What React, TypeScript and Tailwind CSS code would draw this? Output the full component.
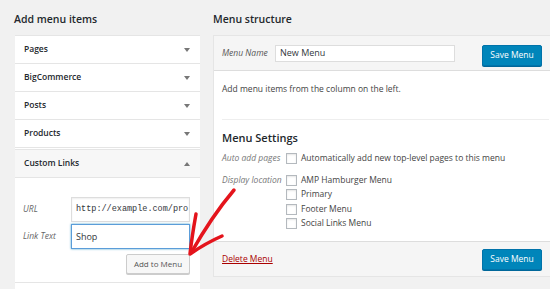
import React from 'react';

const font = { fontFamily: '"Open Sans", "Noto Sans", sans-serif' };

const sections = ['Pages', 'BigCommerce', 'Posts', 'Products'];
const locations = ['AMP Hamburger Menu', 'Primary', 'Footer Menu', 'Social Links Menu'];

const Caret = ({ up = false }: { up?: boolean }) => (
  <span
    className={
      up
        ? 'w-0 h-0 border-x-[3px] border-x-transparent border-b-[4px] border-b-[#777]'
        : 'w-0 h-0 border-x-[3px] border-x-transparent border-t-[4px] border-t-[#777]'
    }
  />
);

const Checkbox = () => (
  <span className="w-[11px] h-[11px] border border-[#b4b9be] bg-white shadow-[inset_0_1px_2px_rgba(0,0,0,0.1)] shrink-0" />
);

const BlueButton = () => (
  <button className="w-[60px] h-[21px] rounded-[2px] bg-[#0085ba] border border-[#0073aa] text-white text-[8.5px] shadow-[0_1px_0_#006799]">
    Save Menu
  </button>
);

export default function App() {
  return (
    <div className="relative w-[550px] h-[289px] overflow-hidden bg-[#f1f1f1] text-[#23282d]" style={font}>
      <div className="flex gap-[13px] pl-[15px]">
        {/* left column */}
        <div className="w-[185px] shrink-0">
          <h2 className="h-[35px] pt-[12px] -ml-[1px] text-[10.5px] font-semibold leading-[14px]">Add menu items</h2>
          <div className="bg-white border-t border-[#e5e5e5]">
            {sections.map((s) => (
              <div key={s} className="h-[28px] flex items-center justify-between pl-[9px] pr-[10px] border-b border-[#e5e5e5] text-[8.5px] font-semibold">
                <span>{s}</span>
                <Caret />
              </div>
            ))}
            <div className="h-[1px] bg-white" />
            <div className="h-[29px] flex items-center justify-between pl-[9px] pr-[10px] border-y border-[#e5e5e5] bg-[#f7f7f7] text-[8.5px] font-semibold">
              <span>Custom Links</span>
              <Caret up />
            </div>
            <div className="h-[105px] pt-[19px] pl-[8px] pr-[10px] border-b border-[#e5e5e5]">
              <div className="flex items-center h-[25px]">
                <span className="w-[48px] text-[8.5px] italic text-[#666]">URL</span>
                <div className="flex-1 h-[25px] border border-[#ddd] flex items-center pl-[4px] text-[8.5px] text-[#32373c] shadow-[inset_0_1px_2px_rgba(0,0,0,0.07)] overflow-hidden whitespace-nowrap" style={{ fontFamily: '"Liberation Mono", monospace' }}>
                  http://example.com/pro
                </div>
              </div>
              <div className="flex items-center h-[25px] mt-[2px]">
                <span className="w-[48px] text-[8.5px] italic text-[#666]">Link Text</span>
                <div className="flex-1 h-[25px] border border-[#5b9dd9] flex items-center pl-[4px] text-[9px] text-[#32373c] shadow-[0_0_2px_rgba(30,140,190,0.8)]">
                  Shop
                </div>
              </div>
              <div className="flex justify-end mt-[5px]">
                <button className="w-[64px] h-[20px] rounded-[2px] bg-[#f7f7f7] border border-[#ccc] shadow-[0_1px_0_#ccc] text-[8px] text-[#555]">
                  Add to Menu
                </button>
              </div>
            </div>
            <div className="h-[10px] bg-white" />
          </div>
        </div>

        {/* right column */}
        <div className="w-[345px] shrink-0">
          <h2 className="h-[35px] pt-[12px] text-[10.5px] font-semibold leading-[14px]">Menu structure</h2>
          <div className="border border-[#e5e5e5] bg-white">
            <div className="h-[35px] flex items-center pl-[8px] pr-[15px] bg-[#f5f5f5] border-b border-[#ddd]">
              <span className="w-[53px] text-[8.5px] italic text-[#555]">Menu Name</span>
              <div className="w-[180px] h-[17px] bg-white border border-[#ddd] flex items-center pl-[4px] text-[9px] text-[#32373c]">
                New Menu
              </div>
              <div className="ml-[27px]">
                <BlueButton />
              </div>
            </div>
            <div className="px-[8px]">
              <p className="pt-[12px] h-[49px] text-[8.5px] leading-[12px] text-[#444] border-b border-[#eee]">Add menu items from the column on the left.</p>
              <h3 className="pt-[11px] text-[11px] font-semibold leading-[14px]">Menu Settings</h3>
              <div className="flex items-center mt-[7px] h-[12px]">
                <span className="w-[64px] text-[8.5px] italic text-[#777] whitespace-nowrap">Auto add pages</span>
                <Checkbox />
                <span className="ml-[4px] text-[8.5px] text-[#444]">Automatically add new top-level pages to this menu</span>
              </div>
              <div className="flex mt-[9px] pb-[10px]">
                <span className="w-[64px] h-[14.5px] flex items-center text-[8.5px] italic text-[#777] whitespace-nowrap">Display location</span>
                <div className="flex flex-col">
                  {locations.map((l) => (
                    <div key={l} className="flex items-center h-[14.5px]">
                      <Checkbox />
                      <span className="ml-[4px] text-[8.5px] text-[#444]">{l}</span>
                    </div>
                  ))}
                </div>
              </div>
            </div>
            <div className="h-[35px] flex items-center justify-between pl-[8px] pr-[15px] bg-[#f5f5f5] border-t border-[#ddd]">
              <a className="text-[8.5px] text-[#a00] underline">Delete Menu</a>
              <BlueButton />
            </div>
          </div>
        </div>
      </div>

      {/* red hand-drawn arrow */}
      <svg className="absolute left-0 top-0 pointer-events-none" width="550" height="289">
        <path d="M234 190 Q 212 216 191 253" fill="none" stroke="#e4141c" strokeWidth="3.5" strokeLinecap="round" />
        <path d="M196 214 Q 192 236 190 254 Q 206 243 222 236" fill="none" stroke="#e4141c" strokeWidth="3.5" strokeLinecap="round" strokeLinejoin="round" />
      </svg>
    </div>
  );
}
